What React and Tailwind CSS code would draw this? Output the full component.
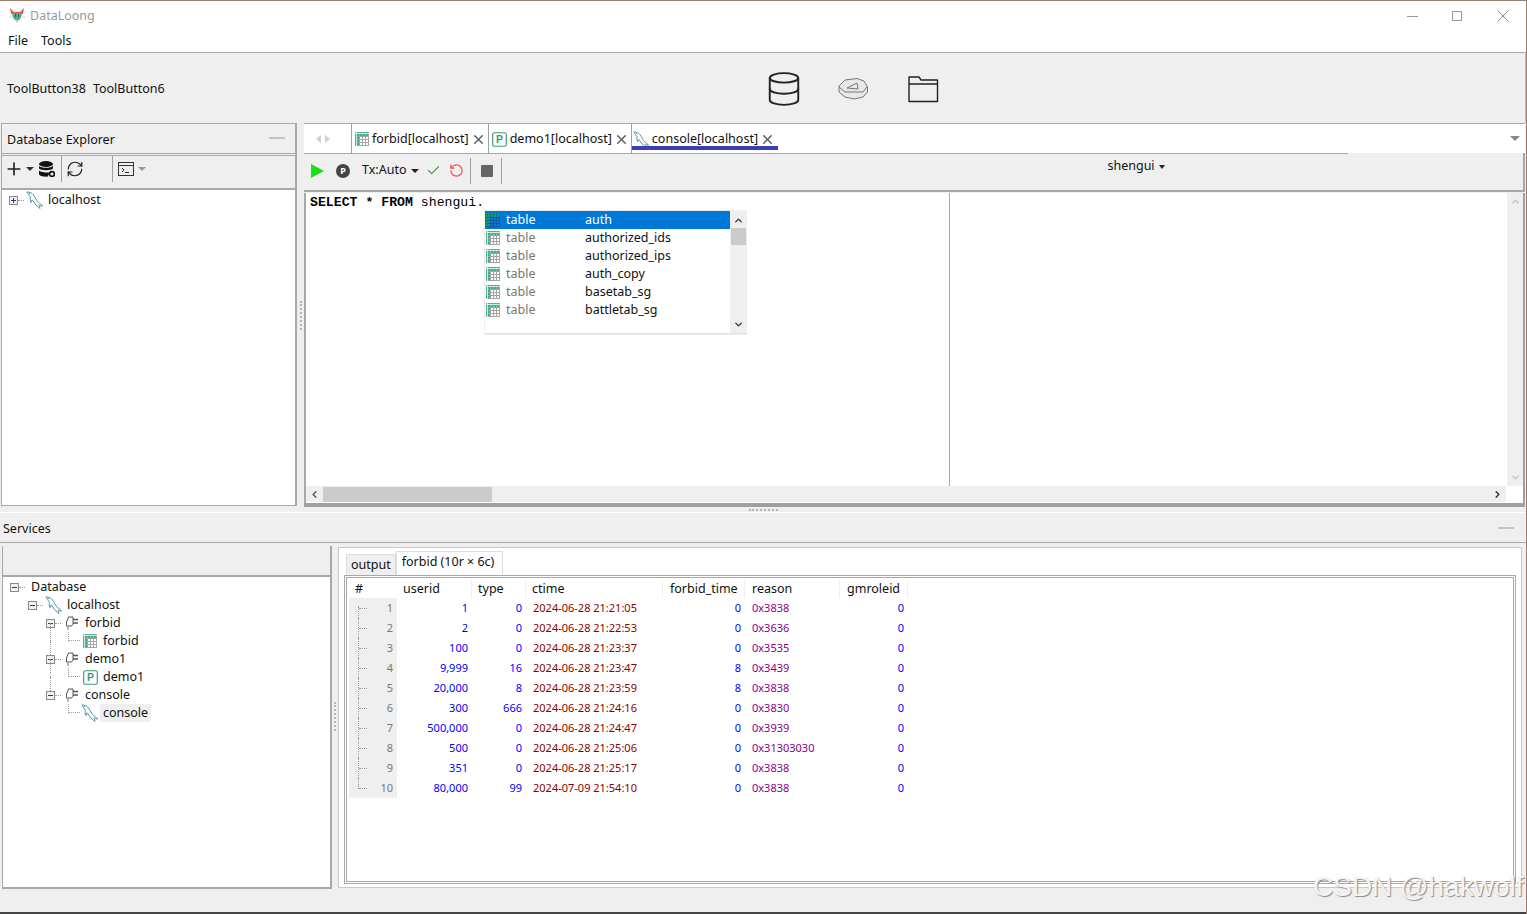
import React from "react";
import { Plus, Database, Check, RotateCcw, RefreshCw, ChevronUp, ChevronDown, ChevronLeft, ChevronRight, X } from "lucide-react";

const FONT = "font-['Noto_Sans','Open_Sans',sans-serif]";

const rows = [
  [1, "1", "0", "2024-06-28 21:21:05", "0", "0x3838", "0"],
  [2, "2", "0", "2024-06-28 21:22:53", "0", "0x3636", "0"],
  [3, "100", "0", "2024-06-28 21:23:37", "0", "0x3535", "0"],
  [4, "9,999", "16", "2024-06-28 21:23:47", "8", "0x3439", "0"],
  [5, "20,000", "8", "2024-06-28 21:23:59", "8", "0x3838", "0"],
  [6, "300", "666", "2024-06-28 21:24:16", "0", "0x3830", "0"],
  [7, "500,000", "0", "2024-06-28 21:24:47", "0", "0x3939", "0"],
  [8, "500", "0", "2024-06-28 21:25:06", "0", "0x31303030", "0"],
  [9, "351", "0", "2024-06-28 21:25:17", "0", "0x3838", "0"],
  [10, "80,000", "99", "2024-07-09 21:54:10", "0", "0x3838", "0"],
];

const completions = ["auth", "authorized_ids", "authorized_ips", "auth_copy", "basetab_sg", "battletab_sg"];

// little grid icon used for tables
const TableIcon = ({ dark }) => (
  <svg width="14" height="14" viewBox="0 0 14 14" className="shrink-0">
    <rect x="0" y="0" width="14" height="14" fill={dark ? "#0b78c4" : "#fff"} />
    <rect x="0" y="0" width="14" height="4" fill={dark ? "#14a070" : "#36b48c"} />
    <rect x="0" y="0" width="4" height="14" fill={dark ? "#14a070" : "#36b48c"} />
    <path d="M0 4.5H14M0 7.5H14M0 10.5H14M4.5 0V14M7.5 0V14M10.5 0V14M13.5 0V14M0 13.5H14" stroke={dark ? "#0a5fa8" : "#a4a4a4"} strokeWidth="1" fill="none" />
    <path d="M0 1.5H14M1.5 0V14" stroke={dark ? "#0a8a70" : "#c8eee0"} strokeWidth="1" fill="none" />
  </svg>
);

const PIcon = ({ size = 16 }) => (
  <svg width={size} height={size} viewBox="0 0 16 16" className="shrink-0">
    <rect x="0.75" y="0.75" width="14.5" height="14.5" rx="2" fill="#fff" stroke="#3d9a72" strokeWidth="1.2" />
    <text x="8" y="12" textAnchor="middle" fontSize="11" fontWeight="700" fill="#3d9a72" fontFamily="Liberation Sans">P</text>
  </svg>
);

// mysql dolphin outline
const Dolphin = ({ size = 18 }) => (
  <svg width={size} height={size} viewBox="0 0 18 18" fill="none" className="shrink-0">
    <path d="M1 1C3.5 0.8 6 2 7.5 4C9.5 6.5 10 9.5 12.5 11.5C14 12.7 15.8 13.5 16.5 15.2C15.2 14.8 14 14.4 13 14.2C13.6 15.2 14 16.2 13.8 17.5C12.6 16.2 11.6 15.2 10.4 14.6C8.6 13 8 10.6 6.2 8.8C5.6 9.8 5.2 10.6 5 11.6C4 9.4 4 7.4 4.4 6.2C3.2 4.6 2 2.8 1 1Z" stroke="#4f93a8" strokeWidth="1" strokeLinejoin="round" />
    <path d="M3 2.6L4 2.8" stroke="#4f93a8" strokeWidth="1" />
  </svg>
);

const PlugIcon = () => (
  <svg width="14" height="16" viewBox="0 0 14 16" fill="none" className="shrink-0">
    <path d="M8 2H3.5L1.5 7V11H6L8 9.5V2Z" fill="#fff" stroke="#555" strokeWidth="1" />
    <path d="M8 4.5H13M8 8H13" stroke="#555" strokeWidth="1.4" />
    <path d="M3 11V15" stroke="#999" strokeWidth="1.4" />
  </svg>
);

const Expander = ({ open }) => (
  <span className="relative w-[9px] h-[9px] shrink-0 border border-[#8a8a8a] bg-[#f0f0f0] flex items-center justify-center">
    <span className="w-[5px] h-px bg-[#2d3a80]" />
    {!open && <span className="absolute w-px h-[5px] bg-[#2d3a80]" />}
  </span>
);

const TreeRow = ({ indent, open, leaf, icon, label, selected, stem, noIcon }) => (
  <div className="relative flex items-center h-[18px]" style={{ paddingLeft: indent }}>
    {stem && <span className="absolute top-[-9px] bottom-[9px] border-l border-dotted border-[#999]" style={{ left: stem }} />}
    {leaf ? (
      <span className="w-[12px] h-[9px] mb-[9px] border-l border-b border-dotted border-[#999] shrink-0" />
    ) : (
      <>
        <Expander open={open} />
        <span className="w-[6px] border-t border-dotted border-[#999] shrink-0" />
      </>
    )}
    {!noIcon && (
      <span className={`w-[18px] flex justify-center shrink-0 ${leaf ? "ml-[1px]" : "ml-[2px]"}`}>{icon}</span>
    )}
    {noIcon && <span className="ml-[2px]" />}
    <span className={`ml-[1px] px-[3px] text-[12.5px] ${selected ? "bg-[#efefef]" : ""}`}>{label}</span>
  </div>
);

const Scrollbar = () => (
  <div className="flex items-center h-[16px] mr-[17px] mb-[1px] bg-[#efefef]">
    <div className="w-[17px] flex justify-center"><ChevronLeft size={11} strokeWidth={3} className="text-[#555]" /></div>
    <div className="w-[169px] h-[15px] bg-[#cbcbcb]" />
    <div className="flex-1" />
    <div className="w-[17px] flex justify-center"><ChevronRight size={11} strokeWidth={3} className="text-[#333]" /></div>
  </div>
);

const EditorTab = ({ icon, label, lead = 3, gap = "ml-[3px]", trail = 2 }) => (
  <div className="relative flex items-center h-[29px] pt-px border-l border-[#a0a0a0]" style={{ paddingLeft: lead, paddingRight: trail }}>
    {icon}
    <span className={`${gap} text-[12.5px] whitespace-nowrap`}>{label}</span>
    <X size={15} strokeWidth={2.6} className="ml-[2px] text-[#666]" />
  </div>
);

const Divider = ({ className = "" }) => <span className={`block shrink-0 w-px h-[26px] bg-[#a0a0a0] ${className}`} />;

export default function App() {
  return (
    <div className={`relative w-[1527px] h-[914px] overflow-hidden flex flex-col bg-white text-[#111] border-t border-r border-[#9a7f70] ${FONT}`}>
      {/* title bar */}
      <div className="flex items-center h-[30px] pl-[9px] pr-[13px] shrink-0">
        <svg width="16" height="16" viewBox="0 0 16 16">
          <path d="M1 0L3 2L5 4H11L13 2L15 0L14 6H2Z" fill="#ea5a48" />
          <path d="M3 5H13L12 10L10 12H6L4 10Z" fill="#45b394" />
          <path d="M6 6H7V9H6ZM9 6H10V9H9Z" fill="#17604f" />
          <path d="M6 12H10L8 15Z" fill="#eab9a0" />
          <path d="M0 9H3M13 9H16" stroke="#f2c4b2" />
        </svg>
        <span className="ml-[5px] text-[12.5px] text-[#9a9a9a]">DataLoong</span>
        <div className="flex-1" />
        <span className="w-[11px] h-px bg-[#999]" />
        <span className="ml-[34px] w-[10px] h-[10px] border border-[#999]" />
        <X size={20} strokeWidth={1} className="ml-[31px] text-[#777]" />
      </div>

      {/* menu */}
      <div className="flex items-center h-[19px] pt-[2px] pl-[8px] gap-[13px] text-[12.5px] shrink-0">
        <span>File</span>
        <span>Tools</span>
      </div>

      {/* main toolbar */}
      <div className="flex items-center h-[71px] mt-[2px] pt-[2px] pl-[7px] bg-[#efefef] border-t border-[#a8a8a8] border-r border-r-[#c0c0c0] shrink-0 text-[12.5px]">
        <span>ToolButton38</span>
        <span className="ml-[7px]">ToolButton6</span>
        <div className="ml-[600px] flex items-center">
          <Database size={38} strokeWidth={1.2} className="text-[#222]" />
          <svg width="32" height="28" viewBox="0 0 32 28" className="ml-[34px]" fill="#e8e8e8" stroke="#777" strokeWidth="1">
            <path d="M8 5L20 3.5L27 6L30.5 12V17L26 22L17 24L8 22L2 17V11Z" />
            <path d="M2 12L8 17L26 17L30 12M10 13L20 8L21 14Z" fill="none" />
          </svg>
          <svg width="32" height="28" viewBox="0 0 32 28" fill="none" stroke="#222" strokeWidth="1.4" strokeLinejoin="round" className="ml-[38px]">
            <path d="M2 6V2H12L14 5H30.5V26.5H2V6ZM2 9H30.5" />
          </svg>
        </div>
      </div>

      {/* editor area */}
      <div className="flex h-[384px] shrink-0 bg-[#efefef]">
        {/* database explorer */}
        <div className="w-[296px] ml-[1px] mb-[1px] flex flex-col border-t border-r-2 border-[#a8a8a8] border-l border-b">
          <div className="flex items-center justify-between h-[30px] pt-[3px] pl-[5px] pr-[10px] border-b border-[#a8a8a8] text-[12.5px] shrink-0">
            <span>Database Explorer</span>
            <span className="w-[16px] h-[2px] mb-[5px] bg-[#c4c4c4]" />
          </div>
          <div className="flex items-center h-[35px] mt-[1px] pb-[6px] pl-[2px] border-t border-b-2 border-[#a8a8a8] shrink-0">
            <Plus size={20} strokeWidth={2} className="text-[#222]" />
            <span className="ml-[2px] border-x-[4px] border-x-transparent border-t-[4px] border-t-[#333]" />
            <svg width="16" height="16" viewBox="0 0 16 16" className="ml-[5px] shrink-0" fill="#111">
              <ellipse cx="7" cy="3" rx="7" ry="3" />
              <path d="M0 5C2 7.4 12 7.4 14 5V7.6C12 9.8 2 9.8 0 7.6ZM0 9.4C2 11.6 10 11.8 10.5 11.2L9 15.6C5 15.8 1 15 0 13.4Z" />
              <circle cx="13" cy="13" r="2.4" fill="none" stroke="#111" strokeWidth="1.6" />
            </svg>
            <Divider className="ml-[6px]" />
            <RefreshCw size={18} strokeWidth={1.6} className="ml-[4px] text-[#222]" />
            <Divider className="ml-[28px]" />
            <svg width="16" height="14" viewBox="0 0 16 14" fill="none" stroke="#333" className="ml-[5px] shrink-0">
              <rect x="0.5" y="0.5" width="15" height="13" />
              <path d="M0.5 3.5H15.5M4 6L6 8L4 10M7 10.5H11" />
            </svg>
            <span className="ml-[4px] border-x-[4px] border-x-transparent border-t-[4px] border-t-[#999]" />
          </div>
          <div className="flex-1 bg-white pl-[7px] pt-px">
            <TreeRow indent={0} icon={<Dolphin />} label="localhost" />
          </div>
        </div>

        {/* vertical splitter */}
        <div className="w-[7px] shrink-0 flex items-center justify-center">
          <span className="h-[29px] border-l-2 border-dotted border-[#b5b5b5]" />
        </div>

        {/* editor */}
        <div className="flex-1 min-w-0 mr-[1px] flex flex-col border-b-4 border-[#a0a0a0]">
          <div className="relative flex items-center h-[30px] bg-white border-t border-[#a8a8a8] shrink-0">
            <div className="flex items-center gap-[4px] w-[47px] pl-[12px]">
              <span className="border-y-[4px] border-y-transparent border-r-[5px] border-r-[#cfcfcf]" />
              <span className="border-y-[4px] border-y-transparent border-l-[5px] border-l-[#cfcfcf]" />
            </div>
            <EditorTab icon={<TableIcon />} label="forbid[localhost]" />
            <EditorTab icon={<PIcon size={15} />} label="demo1[localhost]" />
            <EditorTab icon={<Dolphin size={17} />} label="console[localhost]" lead={1} gap="ml-[2px]" trail={7} />
            <div className="flex-1" />
            <span className="mr-[5px] border-x-[5px] border-x-transparent border-t-[5px] border-t-[#888]" />
            <span className="absolute left-[328px] bottom-[3px] w-[146px] h-[4px] bg-[#3b3fb5]" />
          </div>
          <div className="relative flex items-center h-[39px] pb-[2px] pl-[7px] border-b-2 border-r-2 border-[#a8a8a8] shrink-0 text-[12.5px]">
            <span className="absolute left-0 top-0 w-[1044px] h-px bg-[#a8a8a8]" />
            <span className="border-y-[7px] border-y-transparent border-l-[13px] border-l-[#16e016]" />
            <span className="ml-[12px] w-[14px] h-[14px] rounded-full bg-[#444] text-white text-[9px] font-bold flex items-center justify-center">P</span>
            <span className="ml-[12px]">Tx:Auto</span>
            <span className="ml-[5px] border-x-[4px] border-x-transparent border-t-[4px] border-t-[#222]" />
            <Check size={15} strokeWidth={2} className="ml-[7px] text-[#5a9a5a]" />
            <RotateCcw size={15} strokeWidth={2} className="ml-[8px] text-[#e85a5a]" />
            <Divider className="ml-[6px]" />
            <span className="ml-[10px] w-[12px] h-[12px] rounded-[1px] bg-[#666]" />
            <Divider className="ml-[8px]" />
            <div className="flex items-center ml-[605px] mb-[8px]">
              <span>shengui</span>
              <span className="ml-[4px] border-x-[3px] border-x-transparent border-t-[4px] border-t-[#222]" />
            </div>
          </div>
          <div className="relative flex-1 min-h-0 flex flex-col bg-white border-l-2 border-r-2 border-[#a8a8a8] border-r-[#a0a0a0] mt-[1px]">
            <div className="flex flex-1 min-h-0">
              <div className="w-[644px] border-r border-[#a8a8a8] pl-[4px] pt-px font-['Liberation_Mono',monospace] text-[13.2px] leading-[17px] text-black">
                <b>SELECT * FROM</b> shengui.
              </div>
              <div className="flex-1" />
              <div className="w-[16px] bg-[#efefef] flex flex-col items-center justify-between py-[3px]">
                <ChevronUp size={11} strokeWidth={3} className="text-[#c0c0c0]" />
                <ChevronDown size={11} strokeWidth={3} className="text-[#c0c0c0]" />
              </div>
            </div>
            <Scrollbar />

            {/* completion popup */}
            <div className="absolute left-[179px] top-[18px] w-[261px] h-[123px] flex bg-white border-b border-[#e0e0e0] shadow-[0_0_0_1px_#eeeeee]">
              <div className="flex-1">
                {completions.map((c, i) => (
                  <div key={c} className={`flex items-center h-[18px] pl-[1px] text-[12.5px] ${i === 0 ? "bg-[#0078d7] text-white" : ""}`}>
                    <TableIcon dark={i === 0} />
                    <span className={`ml-[6px] w-[79px] ${i === 0 ? "" : "text-[#777]"}`}>table</span>
                    <span>{c}</span>
                  </div>
                ))}
              </div>
              <div className="w-[16px] bg-[#efefef] flex flex-col items-center">
                <ChevronUp size={11} strokeWidth={3} className="mt-[4px] text-[#333]" />
                <div className="w-[15px] h-[17px] mt-[2px] bg-[#cbcbcb]" />
                <div className="flex-1" />
                <ChevronDown size={11} strokeWidth={3} className="mb-[3px] text-[#333]" />
              </div>
            </div>
          </div>
        </div>
      </div>

      {/* splitter */}
      <div className="flex justify-center items-start h-[6px] bg-[#efefef] border-b border-white shrink-0">
        <span className="mt-[2px] w-[29px] border-t-2 border-dotted border-[#b5b5b5]" />
      </div>

      {/* services */}
      <div className="flex-1 min-h-0 flex flex-col bg-[#efefef] border-b-2 border-[#444]">
        <div className="flex items-center justify-between h-[30px] pt-[3px] pl-[3px] pr-[12px] border-b border-[#a8a8a8] text-[12.5px] shrink-0">
          <span>Services</span>
          <span className="w-[16px] h-[2px] mb-[3px] bg-[#c4c4c4]" />
        </div>
        <div className="flex h-[345px] shrink-0 mt-px">
          <div className="w-[330px] ml-[2px] mt-[2px] flex flex-col border-r-2 border-b-2 border-[#a8a8a8] border-l shrink-0">
            <div className="h-[31px] border-b-2 border-[#a8a8a8] bg-[#efefef] shrink-0" />
            <div className="flex-1 bg-white pl-[7px] pt-px">
              <TreeRow indent={0} open noIcon label="Database" />
              <TreeRow indent={18} open icon={<Dolphin />} label="localhost" />
              <TreeRow indent={36} open icon={<PlugIcon />} label="forbid" />
              <TreeRow indent={58} leaf stem={40} icon={<TableIcon />} label="forbid" />
              <TreeRow indent={36} open stem={40} icon={<PlugIcon />} label="demo1" />
              <TreeRow indent={58} leaf stem={40} icon={<PIcon size={15} />} label="demo1" />
              <TreeRow indent={36} open stem={40} icon={<PlugIcon />} label="console" />
              <TreeRow indent={58} leaf icon={<Dolphin />} label="console" selected />
            </div>
          </div>

          {/* vertical splitter */}
          <div className="w-[6px] shrink-0 flex items-center justify-center pr-[1px]">
            <span className="h-[29px] border-l-2 border-dotted border-[#b5b5b5]" />
          </div>

          <div className="flex-1 min-w-0 mr-[4px] mt-[3px] mb-[1px] bg-white border border-[#c8c8c8] flex flex-col">
            <div className="flex items-end h-[27px] pl-[7px] shrink-0 text-[12.5px]">
              <div className="h-[21px] px-[4px] flex items-center bg-[#efefef] border border-[#dddddd] border-b-0">output</div>
              <div className="h-[24px] pl-[5px] pr-[8px] flex items-center bg-white border border-[#dddddd] border-b-0 pb-[3px]">forbid (10r × 6c)</div>
            </div>
            <div className="flex-1 min-h-0 ml-[5px] mr-[5px] mb-[3px] border border-[#a8a8a8] p-px">
              <div className="h-full border border-[#a8a8a8] pl-[2px] text-[11px]">
                <div className="flex h-[20px] pt-[2px] items-center text-[12.5px]">
                  <span className="w-[48px] pl-[6px]">#</span>
                  <span className="w-[75px] pl-[6px] border-r border-[#efefef]">userid</span>
                  <span className="w-[54px] pl-[6px] border-r border-[#efefef]">type</span>
                  <span className="w-[137px] pl-[6px] border-r border-[#efefef]">ctime</span>
                  <span className="w-[82px] pl-[7px] border-r border-[#efefef]">forbid_time</span>
                  <span className="w-[95px] pl-[7px] border-r border-[#efefef]">reason</span>
                  <span className="w-[68px] pl-[7px] border-r border-[#efefef]">gmroleid</span>
                </div>
                {rows.map((r, i) => (
                  <div key={r[0]} className="flex h-[20px] items-center">
                    <span className="relative w-[48px] h-full flex items-center justify-end pr-[4px] bg-[#efefef] text-[#777]">
                      <span className={`absolute left-[9px] border-l border-dotted border-[#999] ${i === 0 ? "top-[8px] bottom-0" : i === 9 ? "top-0 bottom-[9px]" : "top-0 bottom-0"}`} />
                      <span className="absolute left-[10px] top-[10px] w-[8px] border-t border-dotted border-[#999]" />
                      {r[0]}
                    </span>
                    <span className="w-[75px] pr-[4px] text-right text-[#0000ff]">{r[1]}</span>
                    <span className="w-[54px] pr-[4px] text-right text-[#0000ff]">{r[2]}</span>
                    <span className="w-[137px] pl-[7px] text-[#8b0000]">{r[3]}</span>
                    <span className="w-[82px] pr-[4px] text-right text-[#0000ff]">{r[4]}</span>
                    <span className="w-[95px] pl-[7px] text-[#8b008b]">{r[5]}</span>
                    <span className="w-[68px] pr-[4px] text-right text-[#0000ff]">{r[6]}</span>
                  </div>
                ))}
              </div>
            </div>
          </div>
        </div>
      </div>

      {/* watermark */}
      <span className="absolute left-[1313px] top-[869px] font-['Liberation_Sans',sans-serif] text-[28px] leading-[34px] text-[#f4f4f4] [text-shadow:1px_1px_1px_#8a8a8a] pointer-events-none">CSDN @hakwolf</span>
    </div>
  );
}
